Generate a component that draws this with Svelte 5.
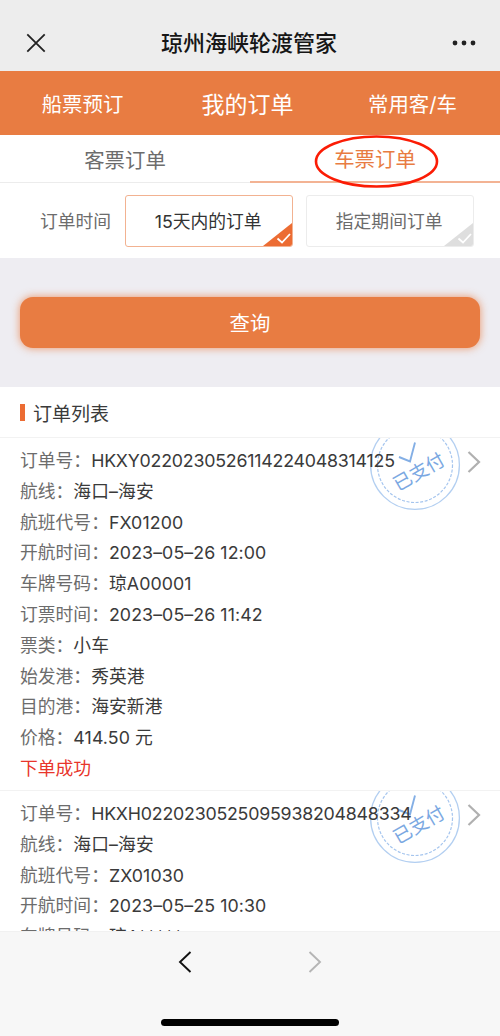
<script lang="ts">
  type Field = { label: string; value: string };
  type Order = { no: string; fields: Field[]; status: string };

  const navItems = ['船票预订', '我的订单', '常用客/车'];
  const tabs = ['客票订单', '车票订单'];
  const ranges = ['15天内的订单', '指定期间订单'];

  let activeNav = 1;
  let activeTab = 1;
  let activeRange = 0;

  const orders: Order[] = [
    {
      no: 'HKXY0220230526114224048314125',
      fields: [
        { label: '航线', value: '海口–海安' },
        { label: '航班代号', value: 'FX01200' },
        { label: '开航时间', value: '2023–05–26 12:00' },
        { label: '车牌号码', value: '琼A00001' },
        { label: '订票时间', value: '2023–05–26 11:42' },
        { label: '票类', value: '小车' },
        { label: '始发港', value: '秀英港' },
        { label: '目的港', value: '海安新港' },
        { label: '价格', value: '414.50 元' },
      ],
      status: '下单成功',
    },
    {
      no: 'HKXH0220230525095938204848334',
      fields: [
        { label: '航线', value: '海口–海安' },
        { label: '航班代号', value: 'ZX01030' },
        { label: '开航时间', value: '2023–05–25 10:30' },
        { label: '车牌号码', value: '琼A*****' },
      ],
      status: '',
    },
  ];
</script>

<div class="screen">
  <header>
    <button class="icon-btn" aria-label="关闭">
      <svg width="20" height="20" viewBox="0 0 20 20" fill="none">
        <path d="M1.3 1.3l17.4 17.4M18.7 1.3L1.3 18.7" stroke="#222" stroke-width="1.8" />
      </svg>
    </button>
    <h1>琼州海峡轮渡管家</h1>
    <button class="icon-btn" aria-label="更多">
      <svg width="24" height="6" viewBox="0 0 24 6" fill="#222">
        <circle cx="3" cy="3" r="2.4" />
        <circle cx="12" cy="3" r="2.4" />
        <circle cx="21" cy="3" r="2.4" />
      </svg>
    </button>
  </header>

  <nav>
    {#each navItems as item, i}
      <button class:active={activeNav === i} on:click={() => (activeNav = i)}>{item}</button>
    {/each}
  </nav>

  <div class="tabs">
    {#each tabs as tab, i}
      <button class:active={activeTab === i} on:click={() => (activeTab = i)}>{tab}</button>
    {/each}
    <svg class="marker" width="126" height="54" viewBox="0 0 126 54" fill="none" aria-hidden="true">
      <ellipse cx="62.5" cy="26.5" rx="60.5" ry="25" stroke="#fb1c05" stroke-width="2.6" />
    </svg>
  </div>

  <div class="filter">
    <span>订单时间</span>
    {#each ranges as range, i}
      <button class:active={activeRange === i} on:click={() => (activeRange = i)}>
        {range}
        <svg class="corner" width="29" height="23" viewBox="0 0 29 23" aria-hidden="true">
          <path d="M0 23L29 0V23Z" fill="currentColor" />
          <path d="M14.5 15.5l4.5 4 8-8.5" fill="none" stroke="#fff" stroke-width="1.8" />
        </svg>
      </button>
    {/each}
  </div>

  <div class="query">
    <button>查询</button>
  </div>

  <h2>订单列表</h2>

  <main>
    {#each orders as order}
      <section class="order">
        <svg class="stamp" width="92" height="74" viewBox="0 0 92 74" aria-hidden="true">
          <g fill="none" stroke="#84afe5">
            <circle cx="46" cy="27" r="44.4" stroke="#b3cff1" stroke-width="1.3" />
            <circle cx="46" cy="27" r="37.5" stroke="#a5c5ee" stroke-width="1.2" stroke-dasharray="3 1.6" />
            <path d="M30 19L41 23.5 46 4.5" stroke-width="1.9" />
          </g>
          <text x="50" y="40.5" text-anchor="middle" transform="rotate(-30 50 34)">已支付</text>
        </svg>
        <svg class="chevron" width="14" height="24" viewBox="0 0 14 24" fill="none" aria-hidden="true">
          <path d="M1.5 2L12 12 1.5 22" stroke="#b0b0b0" stroke-width="2.2" />
        </svg>
        <p><span class="label">订单号：</span><span class="order-no">{order.no}</span></p>
        {#each order.fields as field}
          <p><span class="label">{field.label}：</span><span class="value">{field.value}</span></p>
        {/each}
        {#if order.status}
          <p class="status">{order.status}</p>
        {/if}
      </section>
    {/each}
  </main>

  <footer>
    <div class="history">
      <svg width="14" height="24" viewBox="0 0 14 24" fill="none" aria-hidden="true">
        <path d="M12.5 2L2 12l10.5 10" stroke="#111" stroke-width="1.9" />
      </svg>
      <svg width="14" height="24" viewBox="0 0 14 24" fill="none" aria-hidden="true">
        <path d="M1.5 2L12 12 1.5 22" stroke="#b5b5b5" stroke-width="1.9" />
      </svg>
    </div>
    <div class="home-bar"></div>
  </footer>
</div>

<style>
  :global(body) {
    margin: 0;
  }

  .screen {
    display: flex;
    flex-direction: column;
    width: 500px;
    height: 1036px;
    overflow: hidden;
    background: #fff;
    color: #3a3a3a;
    font-family: Inter, 'Noto Sans CJK SC', sans-serif;
    font-size: 17.8px;
  }

  header, nav, .tabs, .filter, .query, h2, footer { flex-shrink: 0; box-sizing: border-box; }

  h1, h2, p { margin: 0; }

  button {
    border: 0;
    padding: 0;
    background: none;
    color: inherit;
    font: inherit;
    cursor: pointer;
  }

  header {
    display: flex;
    align-items: center;
    justify-content: space-between;
    height: 71px;
    padding: 15px 24px 0 26px;
    background: #ededed;
  }

  h1 {
    font-size: 22px;
    font-weight: 500;
    line-height: 32px;
    color: #161616;
  }

  .icon-btn {
    display: flex;
  }

  nav {
    display: grid;
    grid-template-columns: repeat(3, 165px);
    height: 64px;
    background: #e87c42;
    color: #fff;
    font-size: 20.4px;
  }

  nav button { padding-bottom: 1px; }

  nav .active { font-size: 23px; }

  /* ticket type tabs */
  .tabs {
    position: relative;
    display: grid;
    grid-template-columns: 1fr 1fr;
    height: 48px;
    font-size: 20.4px;
    color: #6c6c6c;
  }

  .tabs button {
    border-bottom: 1px solid #ececec;
  }

  .tabs .active {
    color: #e87c42;
    border-bottom: 2px solid #f3b394;
  }

  .marker {
    position: absolute;
    left: 314px;
    top: 0;
  }

  .filter {
    display: flex;
    align-items: center;
    height: 75px;
    padding-left: 40px;
    color: #6c6c6c;
  }

  .filter span {
    margin-right: 14px;
    padding-bottom: 2px;
  }

  .filter button {
    position: relative;
    box-sizing: border-box;
    width: 168px;
    height: 52px;
    margin-right: 13px;
    padding: 0 2px 2px 0;
    border: 1px solid #ececec;
    border-radius: 3px;
    overflow: hidden;
  }

  .filter .active {
    color: #333;
    border-color: #f2b291;
  }

  .corner {
    position: absolute;
    right: 0;
    bottom: 0;
    color: #dedede;
  }

  .active .corner { color: #ec6c33; }

  .query {
    height: 129px;
    padding: 39px 20px 0;
    background: #eeedf2;
  }

  .query button {
    width: 100%;
    height: 51px;
    padding-bottom: 2px;
    border-radius: 13px;
    background: #e87c42;
    box-shadow: 0 0 8px rgba(232, 124, 66, 0.8);
    color: #fff;
    font-size: 20.4px;
  }

  h2 {
    display: flex;
    align-items: center;
    gap: 8px;
    height: 51px;
    padding-left: 20px;
    border-bottom: 1px solid #f2f2f2;
    font-size: 19px;
    font-weight: 400;
  }

  h2::before {
    content: '';
    width: 5px;
    height: 17px;
    background: #ec6c33;
  }

  /* order list */
  main {
    flex: 1;
    min-height: 0;
    overflow: hidden;
  }

  .order {
    position: relative;
    box-sizing: border-box;
    height: 353px;
    padding: 8px 20px 0;
    border-bottom: 1px solid #f2f2f2;
  }

  .order p {
    position: relative;
    height: 30.8px;
    line-height: 30px;
    white-space: nowrap;
  }

  .label { color: #6c6c6c; }

  .order-no { letter-spacing: -0.22px; }

  .value { letter-spacing: 0.08px; }

  .order .status { color: #e8352b; }

  .stamp {
    position: absolute;
    left: 369px;
    top: 0;
  }

  .stamp text {
    fill: #7ba8e2;
    font-size: 18.6px;
  }

  .chevron {
    position: absolute;
    right: 19px;
    top: 12px;
  }

  footer {
    display: flex;
    flex-direction: column;
    align-items: center;
    justify-content: space-between;
    height: 105px;
    padding: 18px 0 10px;
    border-top: 1px solid #f1f1f1;
    background: #f7f7f7;
  }

  .history {
    display: flex;
    gap: 116px;
  }

  .home-bar {
    width: 178px;
    height: 7px;
    border-radius: 4px;
    background: #000;
  }
</style>
